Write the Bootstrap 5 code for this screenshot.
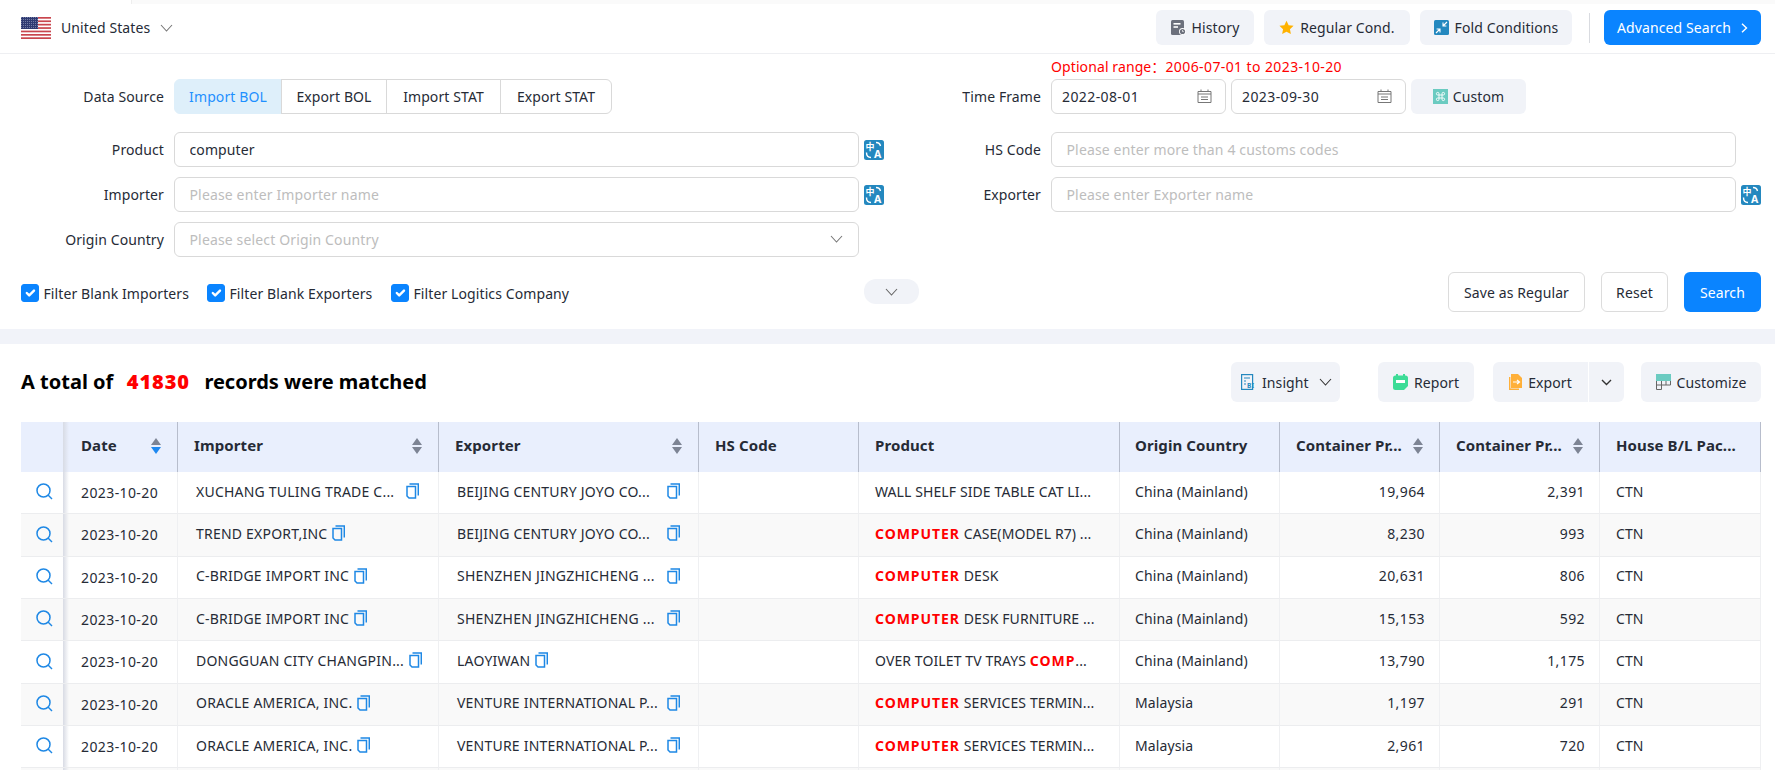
<!DOCTYPE html>
<html lang="en"><head><meta charset="utf-8"><title>Search</title>
<link rel="stylesheet" href="https://cdn.jsdelivr.net/npm/bootstrap@5.3.0/dist/css/bootstrap.min.css">
<style>
html,body{height:770px;overflow:hidden}
body{font-family:"Noto Sans","Noto Sans CJK SC",sans-serif;font-size:14px;color:#262b36;background:#fff;letter-spacing:.1px}
.strip{height:4px;margin-left:131px;background:#fafafa;border-left:1px solid #eee}
.topbar{height:50px;padding:0 14px 2px 21px;border-bottom:1px solid #eeeff2}
.flagbox{width:30px;height:22px;margin-right:10px;display:block}
.softbtn{height:35px;background:#f1f3f8;border:0;border-radius:6px;color:#262b36;font-size:14px;padding:0;gap:6px;display:inline-flex;align-items:center;justify-content:center;letter-spacing:.1px}
.w-hist{width:98px}.w-reg{width:146px;margin-left:10px}.w-fold{width:152px;margin-left:10px}
.vdiv{width:1px;height:30px;background:#d9dbe0;margin:0 14px 0 17px}
.primbtn{background:#0a84ff;border:0;color:#fff;border-radius:6px;font-size:14px;padding:0;display:inline-flex;align-items:center;justify-content:center;letter-spacing:.1px}
.w-adv{width:157px;height:35px;gap:10px}
.w-srch{width:77px;height:40px}
.rangehint{height:25px;padding:5px 0 0 1051px;color:#f00;line-height:16px}
.numtxt{letter-spacing:.4px}
.frow{display:flex;height:35px;margin-bottom:10px}
.frow.first{margin-bottom:18px}
.leftpart{width:890px;display:flex;align-items:center}
.rightpart{flex:1;display:flex;align-items:center;padding-right:14px}
.lbl-l{width:164px;text-align:right;margin-right:10px;flex:none}
.lbl-r{width:151px;text-align:right;margin-right:10px;flex:none}
.fld{height:35px;border:1px solid #d9d9d9;border-radius:6px;font-size:14px;color:#262b36;box-shadow:none;letter-spacing:.1px}
.fld::placeholder{color:#bdbdbd;letter-spacing:.15px}
.fld-l{width:685px;padding:0 14.5px;flex:none}
.fld-r{width:685px;padding:0 14.5px;flex:none}
.tr-ico{width:20px;height:20px;margin-left:5px;flex:none;display:block}
.segbtn{height:35px;border:1px solid #d9d9d9;background:#fff;color:#262b36;font-size:14px;padding:0;border-radius:0;margin-left:-1px;letter-spacing:.1px}
.segbtn:first-child{margin-left:0;border-radius:6px 0 0 6px}
.segbtn:last-child{border-radius:0 6px 6px 0}
.segbtn.on{background:#deeffa;color:#1e90ff;border-color:#deeffa}
.s1{width:108px}.s2{width:106px}.s3{width:115px}.s4{width:112px}
.datewrap{width:175px;height:35px;margin-right:5px;flex:none}
.datewrap input{width:100%;padding:0 30px 0 10px;letter-spacing:.4px}
.ovico{position:absolute;right:14px;top:10px;display:block}
.w-cust{width:115px;gap:5px}
.selwrap{width:685px;flex:none}
.selchev{position:absolute;right:16px;top:13px;display:block}
.filterrow{padding:15px 14px 17px 21px;height:72px}
.chkgroup{width:843px;gap:0;margin-top:2px}
.chk{margin:0;display:inline-flex;align-items:center;gap:4.5px}
.chk .form-check-input{width:18px;height:18px;margin:0;border-radius:3px;background-color:#0a84ff;border-color:#0a84ff;flex:none}
.c1{width:186px}.c2{width:184px}
.pillbtn{width:55px;height:25px;border-radius:12px;background:#f1f3f8;border:0;padding:0;display:flex;align-items:center;justify-content:center;margin-top:-1px}
.outbtn{height:40px;background:#fff;border:1px solid #dcdcdc;border-radius:6px;color:#262b36;font-size:14px;padding:0;letter-spacing:.1px}
.w-save{width:137px;margin-right:16px}.w-reset{width:67px;margin-right:16px}
.band{height:15px;background:#f1f3f9}
.resultbar{padding:18px 14px 20px 21px;height:78px}
.totaltxt{font-size:20px;font-weight:700;color:#000;margin:0;letter-spacing:0}
.totaltxt b{color:#f00;margin:0 14.5px 0 13.5px;letter-spacing:.9px}
.toolbtn{height:40px}
.w-ins{width:109px;margin-right:38px;justify-content:flex-start;padding-left:10px}.w-rep{width:96px;margin-right:19px}
.w-exp{width:95px;border-radius:6px 0 0 6px}.w-car{width:35px;margin:0 17px 0 1px;border-radius:0 6px 6px 0}
.w-cus{width:120px}
.tablebox{padding:0 14px 0 21px}
.datatbl{table-layout:fixed;width:1740px;margin:0;border-collapse:separate;border-spacing:0;font-size:14px;color:#262b36}
.datatbl th,.datatbl td{padding:0 0 3px 16px;vertical-align:middle;white-space:nowrap;overflow:hidden;border-bottom:1px solid #ecedef;border-right:1px solid #eff0f2;box-shadow:none;color:#262b36}
.datatbl thead th{height:50px;background:#e9effd;border-bottom:0;border-right:1px solid #b7bdcc;font-weight:700;font-size:15px;letter-spacing:.1px;padding:0 16px 3px 16px}
.datatbl tbody tr{height:42.33px}
.datatbl tbody tr.alt td{background:#f9f9f9}
.datatbl td.dcell{padding:0 0 0 18px;letter-spacing:.4px}
.datatbl th.dcell{padding-left:18px}
.datatbl .dcell{background-image:linear-gradient(to right,#d8dbe4,rgba(216,219,228,0) 6px)!important}
.datatbl td.magcell{padding:0 0 5px 4px;text-align:center;border-right:0}
.datatbl th.magcell{padding:0;border-right:0}
.datatbl td.num{text-align:right;padding-right:14px;letter-spacing:.4px}
.datatbl .ocell{padding-left:15px}
.thflex{display:flex;align-items:center;justify-content:space-between}
.cellflex{display:flex;align-items:center;width:223px;margin-left:2px;gap:5px;letter-spacing:.22px}
.cellflex.full{justify-content:space-between}
.cp{display:block;flex:none}
.hit{color:#f00;font-weight:700;letter-spacing:.95px}
</style></head>
<body>
<div class="strip"></div>
<header class="topbar d-flex align-items-center justify-content-between">
  <div class="d-flex align-items-center">
    <svg class="flagbox" viewBox="0 0 30 22"><rect width="30" height="22" fill="#fff"/><g fill="#c9464e"><rect y="0" width="30" height="1.7"/><rect y="3.4" width="30" height="1.7"/><rect y="6.8" width="30" height="1.7"/><rect y="10.2" width="30" height="1.7"/><rect y="13.6" width="30" height="1.7"/><rect y="17" width="30" height="1.7"/><rect y="20.3" width="30" height="1.7"/></g><defs><pattern id="st" width="2" height="2" patternUnits="userSpaceOnUse"><rect width="2" height="2" fill="#2f3a72"/><rect width=".8" height=".8" fill="#9aa3c4"/></pattern></defs><rect width="17" height="12" fill="url(#st)"/></svg>
    <span>United States</span>
    <svg class="ms-2" style="margin-left:10px!important" width="13" height="8" viewBox="0 0 13 8"><path d="M1 1l5.500 6L12 1" fill="none" stroke="#777" stroke-width="1.100"/></svg>
  </div>
  <div class="d-flex align-items-center">
    <button class="softbtn w-hist" type="button"><svg width="15" height="15" viewBox="0 0 15 15"><rect width="13" height="15" rx="1.5" fill="#6c707c"/><rect x="2.5" y="3" width="7" height="1.6" fill="#fff"/><rect x="2.5" y="6.2" width="4.5" height="1.6" fill="#fff"/><circle cx="11.5" cy="11.5" r="3.5" fill="#fff"/><circle cx="11.5" cy="11.5" r="2.6" fill="#6c707c"/><path d="M11.5 10v1.6h1.3" stroke="#fff" stroke-width=".7" fill="none"/></svg>History</button>
    <button class="softbtn w-reg" type="button"><svg width="15" height="15" viewBox="0 0 24 24"><path d="M12 1l3.400 7.200 7.900 1-5.800 5.500 1.500 7.800-7-3.900-7 3.900 1.500-7.800L.7 9.200l7.900-1z" fill="#ffb200"/></svg>Regular Cond.</button>
    <button class="softbtn w-fold" type="button"><svg width="15" height="15" viewBox="0 0 15 15"><rect width="15" height="15" rx="1.5" fill="#2488bf"/><path d="M13 2L9 6M9 2.600V6h3.400M2 13l4-4M6 12.400V9H2.600" fill="none" stroke="#fff" stroke-width="1.100"/></svg>Fold Conditions</button>
    <span class="vdiv"></span>
    <button class="primbtn w-adv" type="button">Advanced Search<svg width="7" height="10" viewBox="0 0 7 10"><path d="M1 .7l4.500 4.300L1 9.300" fill="none" stroke="#fff" stroke-width="1.400"/></svg></button>
  </div>
</header>

<section>
  <div class="rangehint">Optional range：<span class="numtxt">2006-07-01 to 2023-10-20</span></div>
  <div class="frow first">
    <div class="leftpart"><span class="lbl-l">Data Source</span>
      <div class="btn-group"><button class="btn segbtn on s1" type="button">Import BOL</button><button class="btn segbtn s2" type="button">Export BOL</button><button class="btn segbtn s3" type="button">Import STAT</button><button class="btn segbtn s4" type="button">Export STAT</button></div>
    </div>
    <div class="rightpart"><span class="lbl-r">Time Frame</span>
      <div class="datewrap position-relative"><input class="form-control fld" value="2022-08-01"><svg class="ovico" width="15" height="14" viewBox="0 0 15 14"><path d="M1 2.500h13v11H1zM1 5h13M4 .5v2M11 .5v2M4 8h7M4 10.500h7" fill="none" stroke="#777" stroke-width="1"/></svg></div>
      <div class="datewrap position-relative"><input class="form-control fld" value="2023-09-30"><svg class="ovico" width="15" height="14" viewBox="0 0 15 14"><path d="M1 2.500h13v11H1zM1 5h13M4 .5v2M11 .5v2M4 8h7M4 10.500h7" fill="none" stroke="#777" stroke-width="1"/></svg></div>
      <button class="softbtn w-cust" type="button"><svg width="15" height="15" viewBox="0 0 15 15"><rect width="15" height="15" fill="#6bcbc1"/><path d="M6 6h3v3H6zM6 6H4.700A1.300 1.300 0 1 1 6 4.700zM9 6V4.700A1.300 1.300 0 1 1 10.300 6zM9 9h1.300A1.300 1.300 0 1 1 9 10.300zM6 9v1.300A1.300 1.300 0 1 1 4.700 9z" fill="none" stroke="#fff" stroke-width=".9"/></svg>Custom</button>
    </div>
  </div>
  <div class="frow">
    <div class="leftpart"><span class="lbl-l">Product</span><input class="form-control fld fld-l" value="computer">
      <svg class="tr-ico" viewBox="0 0 20 20"><rect width="20" height="20" rx="2.500" fill="#2488bf"/><text x="1.500" y="9.500" font-size="9" font-weight="700" fill="#fff" font-family="Noto Sans CJK SC">中</text><text x="10" y="18" font-size="10.500" font-weight="700" fill="#fff" font-family="Noto Sans">A</text><path d="M12 2.500c2 0 4 1 4.500 3.500M2.500 12.500c0 3 1.500 5 4.500 5" fill="none" stroke="#fff" stroke-width="1.400"/></svg></div>
    <div class="rightpart"><span class="lbl-r">HS Code</span><input class="form-control fld fld-r" placeholder="Please enter more than 4 customs codes"></div>
  </div>
  <div class="frow">
    <div class="leftpart"><span class="lbl-l">Importer</span><input class="form-control fld fld-l" placeholder="Please enter Importer name">
      <svg class="tr-ico" viewBox="0 0 20 20"><rect width="20" height="20" rx="2.500" fill="#2488bf"/><text x="1.500" y="9.500" font-size="9" font-weight="700" fill="#fff" font-family="Noto Sans CJK SC">中</text><text x="10" y="18" font-size="10.500" font-weight="700" fill="#fff" font-family="Noto Sans">A</text><path d="M12 2.500c2 0 4 1 4.500 3.500M2.500 12.500c0 3 1.500 5 4.500 5" fill="none" stroke="#fff" stroke-width="1.400"/></svg></div>
    <div class="rightpart"><span class="lbl-r">Exporter</span><input class="form-control fld fld-r" placeholder="Please enter Exporter name">
      <svg class="tr-ico" viewBox="0 0 20 20"><rect width="20" height="20" rx="2.500" fill="#2488bf"/><text x="1.500" y="9.500" font-size="9" font-weight="700" fill="#fff" font-family="Noto Sans CJK SC">中</text><text x="10" y="18" font-size="10.500" font-weight="700" fill="#fff" font-family="Noto Sans">A</text><path d="M12 2.500c2 0 4 1 4.500 3.500M2.500 12.500c0 3 1.500 5 4.500 5" fill="none" stroke="#fff" stroke-width="1.400"/></svg></div>
  </div>
  <div class="frow mb-0">
    <div class="leftpart"><span class="lbl-l">Origin Country</span>
      <div class="selwrap position-relative"><input class="form-control fld w-100 fld-l" placeholder="Please select Origin Country"><svg class="selchev" width="13" height="8" viewBox="0 0 13 8"><path d="M1 1l5.500 6L12 1" fill="none" stroke="#777" stroke-width="1.100"/></svg></div>
    </div>
    <div class="rightpart"></div>
  </div>
  <div class="filterrow d-flex align-items-center">
    <div class="chkgroup d-flex align-items-center">
      <label class="chk c1"><input class="form-check-input" type="checkbox" checked>Filter Blank Importers</label>
      <label class="chk c2"><input class="form-check-input" type="checkbox" checked>Filter Blank Exporters</label>
      <label class="chk"><input class="form-check-input" type="checkbox" checked>Filter Logitics Company</label>
    </div>
    <button class="pillbtn" type="button" aria-label="More"><svg width="13" height="8" viewBox="0 0 13 8"><path d="M1 1l5.500 6L12 1" fill="none" stroke="#666" stroke-width="1.100"/></svg></button>
    <div class="ms-auto d-flex">
      <button class="outbtn w-save" type="button">Save as Regular</button>
      <button class="outbtn w-reset" type="button">Reset</button>
      <button class="primbtn w-srch" type="button">Search</button>
    </div>
  </div>
</section>
<div class="band"></div>
<section>
  <div class="resultbar d-flex align-items-center justify-content-between">
    <h2 class="totaltxt">A total of<b>41830</b>records were matched</h2>
    <div class="d-flex">
      <button class="softbtn toolbtn w-ins" type="button"><svg width="15" height="16" viewBox="0 0 15 16"><rect x=".6" y=".6" width="11" height="14.800" fill="none" stroke="#2488bf" stroke-width="1.200"/><path d="M3 4h6M3 7h2M3 10h2" stroke="#2488bf" stroke-width="1.200"/><text x="6" y="14" font-size="6.500" font-weight="700" fill="#2488bf" font-family="Noto Sans">BI</text></svg>Insight<svg class="ms-1" width="13" height="8" viewBox="0 0 13 8"><path d="M1 1l5.500 6L12 1" fill="none" stroke="#333" stroke-width="1.100"/></svg></button>
      <button class="softbtn toolbtn w-rep" type="button"><svg width="15" height="16" viewBox="0 0 15 16"><path d="M2.500 1.500h10A2.500 2.500 0 0 1 15 4v8l-4 4H2.500A2.500 2.500 0 0 1 0 13.500V4a2.500 2.500 0 0 1 2.500-2.500z" fill="#3ddc97"/><rect x="3" y="0" width="2" height="3" fill="#3ddc97"/><rect x="10" y="0" width="2" height="3" fill="#3ddc97"/><rect x="3" y="6" width="9" height="3" fill="#fff"/></svg>Report</button>
      <button class="softbtn toolbtn w-exp" type="button"><svg width="13" height="16" viewBox="0 0 13 16"><path d="M.7 3v12.300H10" fill="none" stroke="#ffb03a" stroke-width="1.400"/><path d="M2 0h7l4 4v10H2z" fill="#ffb03a"/><path d="M4 8h6M8 6l2.500 2L8 10" fill="none" stroke="#fff" stroke-width="1.200"/></svg>Export</button>
      <button class="softbtn toolbtn w-car" type="button" aria-label="More"><svg width="11" height="7" viewBox="0 0 11 7"><path d="M1 1l4.500 4.500L10 1" fill="none" stroke="#333" stroke-width="1.400"/></svg></button>
      <button class="softbtn toolbtn w-cus" type="button"><svg width="15" height="16" viewBox="0 0 15 16"><rect width="15" height="7" fill="#6bcbc1"/><path d="M.5 7v8.500h5V7M.5 11h14M5.500 7v4M10 7v4M14.500 7v4" fill="none" stroke="#666" stroke-width="1"/></svg>Customize</button>
    </div>
  </div>
  <div class="tablebox">
    <table class="table datatbl">
      <colgroup><col style="width:42px"><col style="width:115px"><col style="width:261px"><col style="width:260px"><col style="width:160px"><col style="width:261px"><col style="width:160px"><col style="width:160px"><col style="width:160px"><col style="width:161px"></colgroup>
      <thead><tr>
        <th class="magcell"></th>
        <th class="dcell"><div class="thflex">Date<svg width="10" height="16" viewBox="0 0 10 16"><path d="M5 0l5 7H0z" fill="#7d8494"/><path d="M5 16l5-7H0z" fill="#1e88f0"/></svg></div></th>
        <th><div class="thflex">Importer<svg width="10" height="16" viewBox="0 0 10 16"><path d="M5 0l5 7H0zM5 16l5-7H0z" fill="#7d8494"/></svg></div></th>
        <th><div class="thflex">Exporter<svg width="10" height="16" viewBox="0 0 10 16"><path d="M5 0l5 7H0zM5 16l5-7H0z" fill="#7d8494"/></svg></div></th>
        <th>HS Code</th>
        <th>Product</th>
        <th class="ocell">Origin Country</th>
        <th><div class="thflex">Container Pr...<svg width="10" height="16" viewBox="0 0 10 16"><path d="M5 0l5 7H0zM5 16l5-7H0z" fill="#7d8494"/></svg></div></th>
        <th><div class="thflex">Container Pr...<svg width="10" height="16" viewBox="0 0 10 16"><path d="M5 0l5 7H0zM5 16l5-7H0z" fill="#7d8494"/></svg></div></th>
        <th>House B/L Pac...</th>
      </tr></thead>
      <tbody>
        <tr><td class="magcell"><svg width="17" height="17" viewBox="0 0 17 17"><circle cx="7.500" cy="7.500" r="6.500" fill="none" stroke="#1e88e5" stroke-width="1.500"/><path d="M12 12l4 4" stroke="#1e88e5" stroke-width="1.500"/></svg></td><td class="dcell">2023-10-20</td><td><div class="cellflex full"><span>XUCHANG TULING TRADE C...</span><svg class="cp" width="13" height="16" viewBox="0 0 13 16"><path d="M3.500 1h8.800v11.500M1 3.500h8.500V15H3L1 13z" fill="none" stroke="#1e88e5" stroke-width="1.500"/></svg></div></td><td><div class="cellflex full"><span>BEIJING CENTURY JOYO CO...</span><svg class="cp" width="13" height="16" viewBox="0 0 13 16"><path d="M3.500 1h8.800v11.500M1 3.500h8.500V15H3L1 13z" fill="none" stroke="#1e88e5" stroke-width="1.500"/></svg></div></td><td></td><td>WALL SHELF SIDE TABLE CAT LI...</td><td class="ocell">China (Mainland)</td><td class="num">19,964</td><td class="num">2,391</td><td>CTN</td></tr>
        <tr class="alt"><td class="magcell"><svg width="17" height="17" viewBox="0 0 17 17"><circle cx="7.500" cy="7.500" r="6.500" fill="none" stroke="#1e88e5" stroke-width="1.500"/><path d="M12 12l4 4" stroke="#1e88e5" stroke-width="1.500"/></svg></td><td class="dcell">2023-10-20</td><td><div class="cellflex"><span>TREND EXPORT,INC</span><svg class="cp" width="13" height="16" viewBox="0 0 13 16"><path d="M3.500 1h8.800v11.500M1 3.500h8.500V15H3L1 13z" fill="none" stroke="#1e88e5" stroke-width="1.500"/></svg></div></td><td><div class="cellflex full"><span>BEIJING CENTURY JOYO CO...</span><svg class="cp" width="13" height="16" viewBox="0 0 13 16"><path d="M3.500 1h8.800v11.500M1 3.500h8.500V15H3L1 13z" fill="none" stroke="#1e88e5" stroke-width="1.500"/></svg></div></td><td></td><td><span class="hit">COMPUTER</span> CASE(MODEL R7) ...</td><td class="ocell">China (Mainland)</td><td class="num">8,230</td><td class="num">993</td><td>CTN</td></tr>
        <tr><td class="magcell"><svg width="17" height="17" viewBox="0 0 17 17"><circle cx="7.500" cy="7.500" r="6.500" fill="none" stroke="#1e88e5" stroke-width="1.500"/><path d="M12 12l4 4" stroke="#1e88e5" stroke-width="1.500"/></svg></td><td class="dcell">2023-10-20</td><td><div class="cellflex"><span>C-BRIDGE IMPORT INC</span><svg class="cp" width="13" height="16" viewBox="0 0 13 16"><path d="M3.500 1h8.800v11.500M1 3.500h8.500V15H3L1 13z" fill="none" stroke="#1e88e5" stroke-width="1.500"/></svg></div></td><td><div class="cellflex full"><span>SHENZHEN JINGZHICHENG ...</span><svg class="cp" width="13" height="16" viewBox="0 0 13 16"><path d="M3.500 1h8.800v11.500M1 3.500h8.500V15H3L1 13z" fill="none" stroke="#1e88e5" stroke-width="1.500"/></svg></div></td><td></td><td><span class="hit">COMPUTER</span> DESK</td><td class="ocell">China (Mainland)</td><td class="num">20,631</td><td class="num">806</td><td>CTN</td></tr>
        <tr class="alt"><td class="magcell"><svg width="17" height="17" viewBox="0 0 17 17"><circle cx="7.500" cy="7.500" r="6.500" fill="none" stroke="#1e88e5" stroke-width="1.500"/><path d="M12 12l4 4" stroke="#1e88e5" stroke-width="1.500"/></svg></td><td class="dcell">2023-10-20</td><td><div class="cellflex"><span>C-BRIDGE IMPORT INC</span><svg class="cp" width="13" height="16" viewBox="0 0 13 16"><path d="M3.500 1h8.800v11.500M1 3.500h8.500V15H3L1 13z" fill="none" stroke="#1e88e5" stroke-width="1.500"/></svg></div></td><td><div class="cellflex full"><span>SHENZHEN JINGZHICHENG ...</span><svg class="cp" width="13" height="16" viewBox="0 0 13 16"><path d="M3.500 1h8.800v11.500M1 3.500h8.500V15H3L1 13z" fill="none" stroke="#1e88e5" stroke-width="1.500"/></svg></div></td><td></td><td><span class="hit">COMPUTER</span> DESK FURNITURE ...</td><td class="ocell">China (Mainland)</td><td class="num">15,153</td><td class="num">592</td><td>CTN</td></tr>
        <tr><td class="magcell"><svg width="17" height="17" viewBox="0 0 17 17"><circle cx="7.500" cy="7.500" r="6.500" fill="none" stroke="#1e88e5" stroke-width="1.500"/><path d="M12 12l4 4" stroke="#1e88e5" stroke-width="1.500"/></svg></td><td class="dcell">2023-10-20</td><td><div class="cellflex full"><span>DONGGUAN CITY CHANGPIN...</span><svg class="cp" width="13" height="16" viewBox="0 0 13 16"><path d="M3.500 1h8.800v11.500M1 3.500h8.500V15H3L1 13z" fill="none" stroke="#1e88e5" stroke-width="1.500"/></svg></div></td><td><div class="cellflex"><span>LAOYIWAN</span><svg class="cp" width="13" height="16" viewBox="0 0 13 16"><path d="M3.500 1h8.800v11.500M1 3.500h8.500V15H3L1 13z" fill="none" stroke="#1e88e5" stroke-width="1.500"/></svg></div></td><td></td><td>OVER TOILET TV TRAYS <span class="hit">COMP</span>...</td><td class="ocell">China (Mainland)</td><td class="num">13,790</td><td class="num">1,175</td><td>CTN</td></tr>
        <tr class="alt"><td class="magcell"><svg width="17" height="17" viewBox="0 0 17 17"><circle cx="7.500" cy="7.500" r="6.500" fill="none" stroke="#1e88e5" stroke-width="1.500"/><path d="M12 12l4 4" stroke="#1e88e5" stroke-width="1.500"/></svg></td><td class="dcell">2023-10-20</td><td><div class="cellflex"><span>ORACLE AMERICA, INC.</span><svg class="cp" width="13" height="16" viewBox="0 0 13 16"><path d="M3.500 1h8.800v11.500M1 3.500h8.500V15H3L1 13z" fill="none" stroke="#1e88e5" stroke-width="1.500"/></svg></div></td><td><div class="cellflex full"><span>VENTURE INTERNATIONAL P...</span><svg class="cp" width="13" height="16" viewBox="0 0 13 16"><path d="M3.500 1h8.800v11.500M1 3.500h8.500V15H3L1 13z" fill="none" stroke="#1e88e5" stroke-width="1.500"/></svg></div></td><td></td><td><span class="hit">COMPUTER</span> SERVICES TERMIN...</td><td class="ocell">Malaysia</td><td class="num">1,197</td><td class="num">291</td><td>CTN</td></tr>
        <tr><td class="magcell"><svg width="17" height="17" viewBox="0 0 17 17"><circle cx="7.500" cy="7.500" r="6.500" fill="none" stroke="#1e88e5" stroke-width="1.500"/><path d="M12 12l4 4" stroke="#1e88e5" stroke-width="1.500"/></svg></td><td class="dcell">2023-10-20</td><td><div class="cellflex"><span>ORACLE AMERICA, INC.</span><svg class="cp" width="13" height="16" viewBox="0 0 13 16"><path d="M3.500 1h8.800v11.500M1 3.500h8.500V15H3L1 13z" fill="none" stroke="#1e88e5" stroke-width="1.500"/></svg></div></td><td><div class="cellflex full"><span>VENTURE INTERNATIONAL P...</span><svg class="cp" width="13" height="16" viewBox="0 0 13 16"><path d="M3.500 1h8.800v11.500M1 3.500h8.500V15H3L1 13z" fill="none" stroke="#1e88e5" stroke-width="1.500"/></svg></div></td><td></td><td><span class="hit">COMPUTER</span> SERVICES TERMIN...</td><td class="ocell">Malaysia</td><td class="num">2,961</td><td class="num">720</td><td>CTN</td></tr>
        <tr class="alt"><td class="magcell"></td><td class="dcell"></td><td></td><td></td><td></td><td></td><td></td><td></td><td></td><td></td></tr>
      </tbody>
    </table>
  </div>
</section>
<script src="https://cdn.jsdelivr.net/npm/bootstrap@5.3.0/dist/js/bootstrap.bundle.min.js"></script>
</body></html>
